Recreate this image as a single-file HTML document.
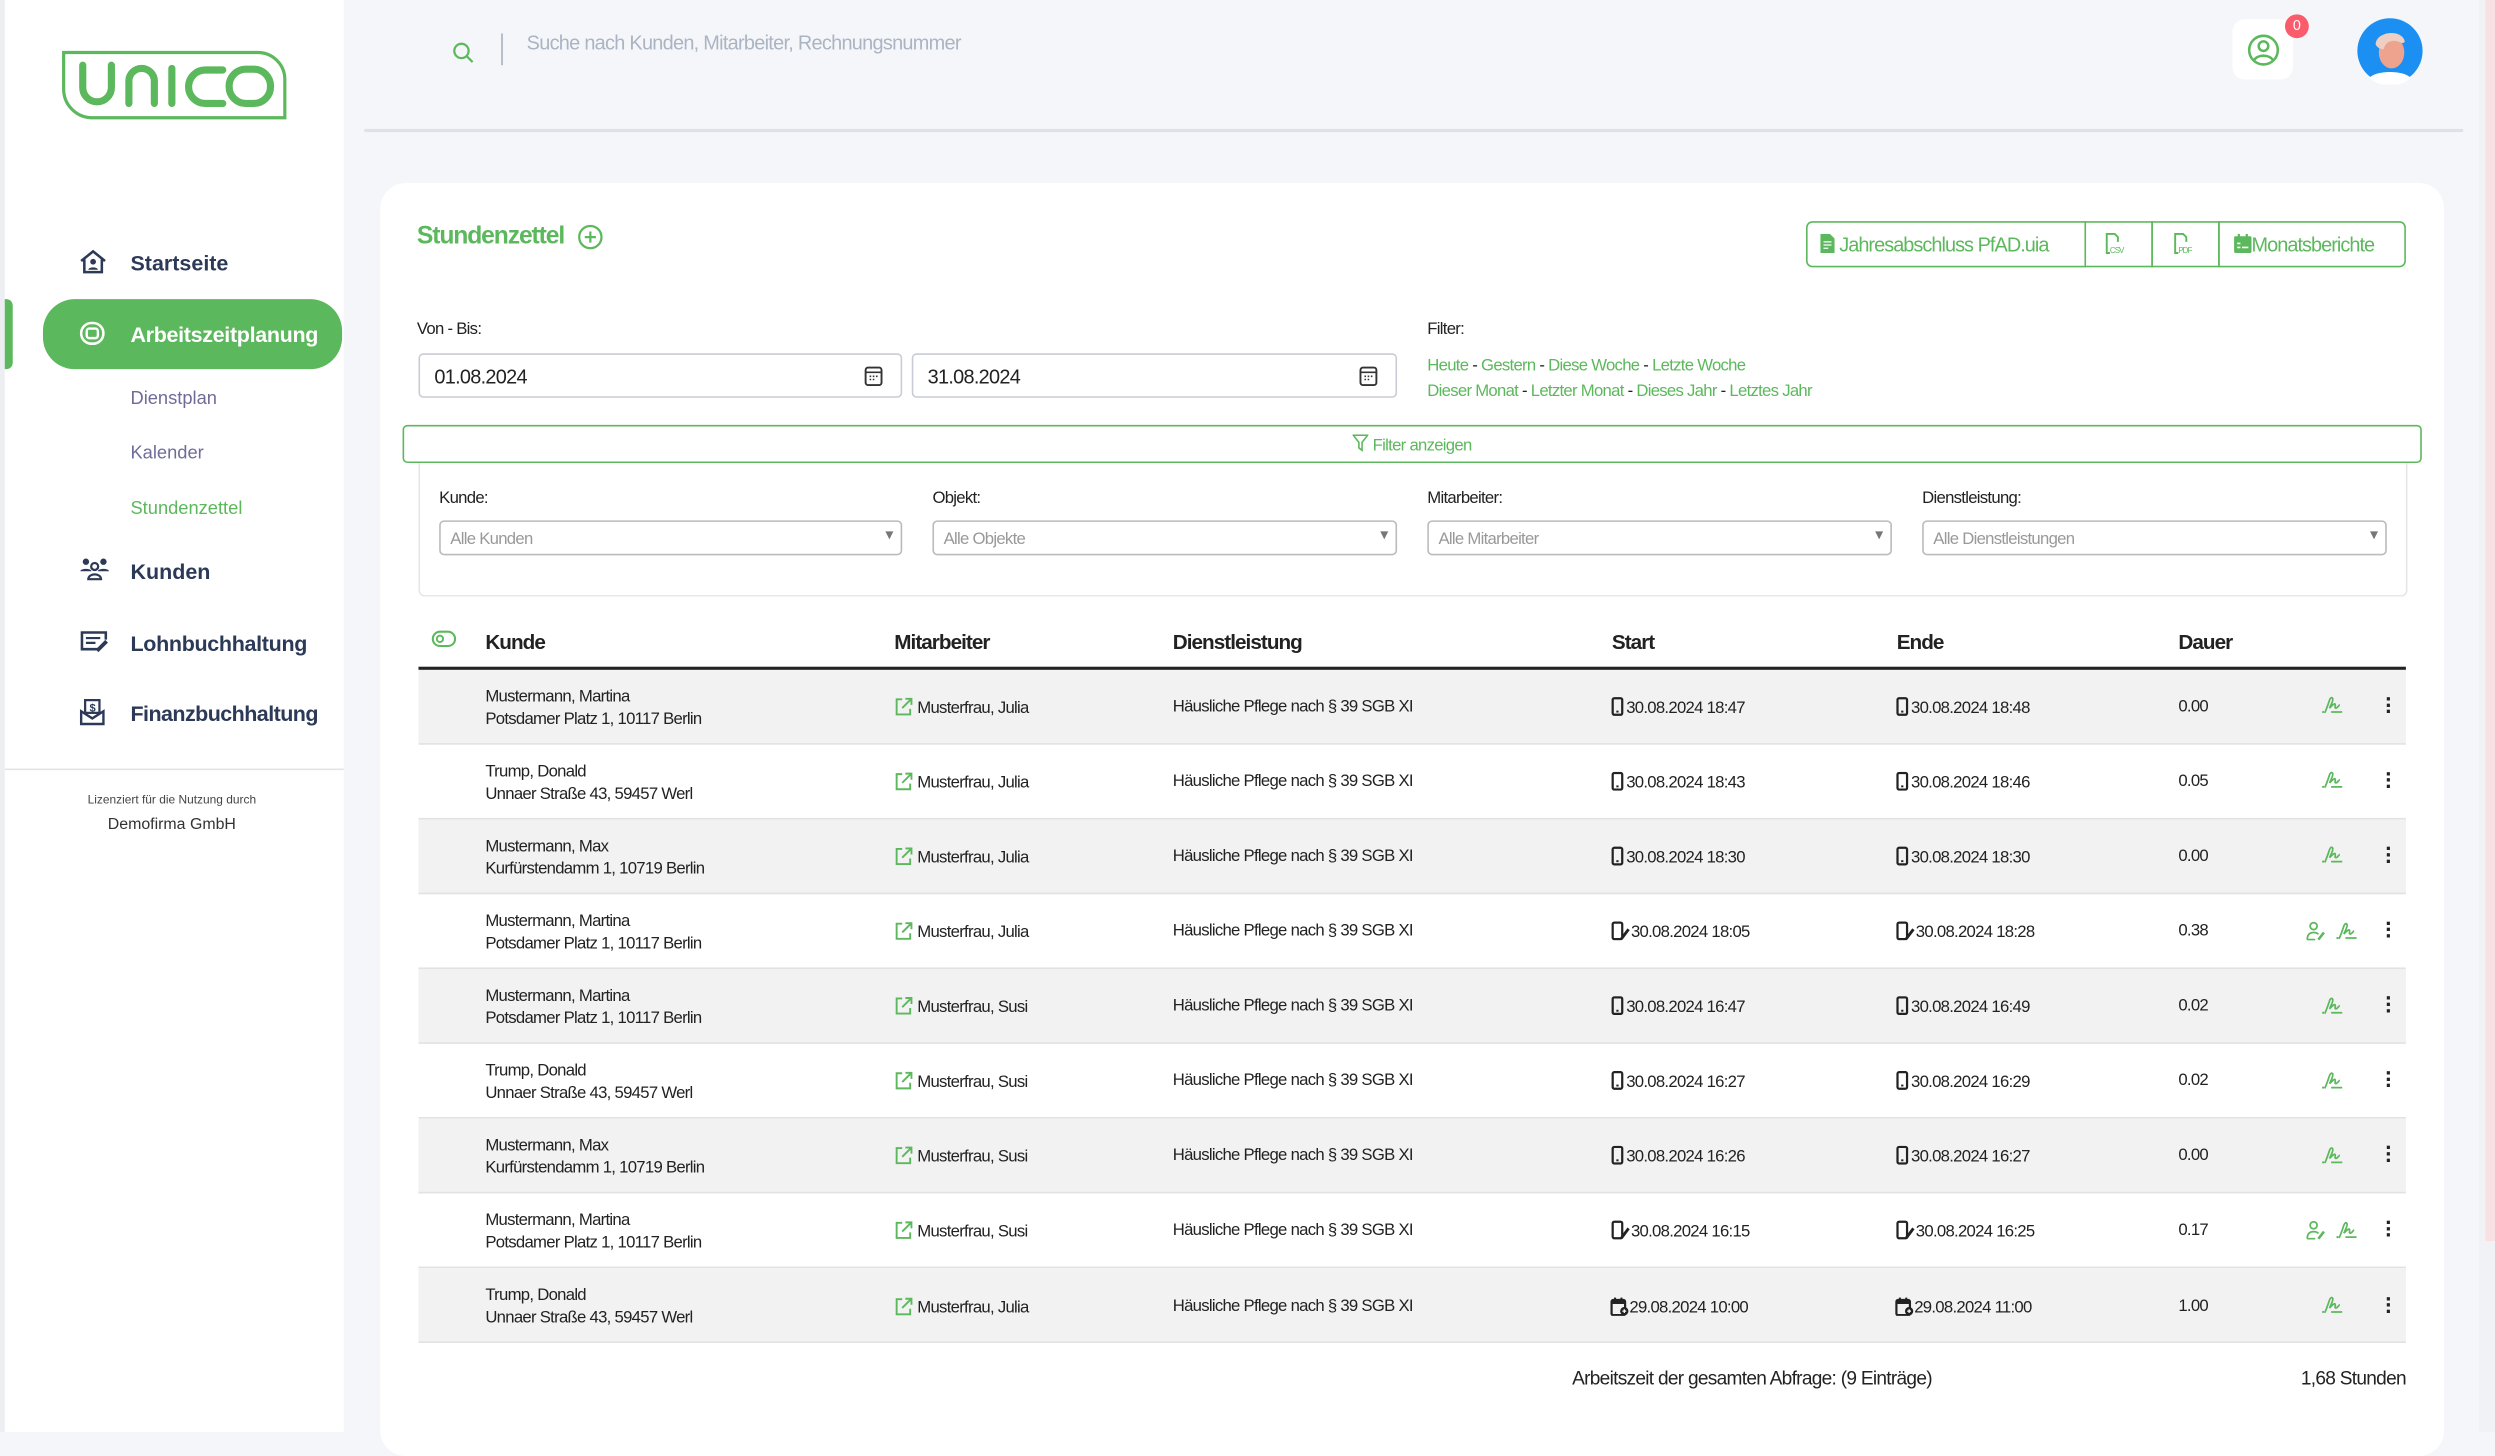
<!DOCTYPE html>
<html><head><meta charset="utf-8">
<style>
*{box-sizing:border-box;margin:0;padding:0}
html,body{width:2495px;height:1403px;overflow:hidden;background:#f5f6f9}
#w{position:absolute;left:0;top:0;width:1568px;height:900px;transform:scale(1.59120);transform-origin:0 0;font-family:"Liberation Sans",sans-serif;color:#222;letter-spacing:-0.45px}
.a{position:absolute;white-space:nowrap}
.side{font-family:"Liberation Sans",sans-serif;letter-spacing:0}
.nav{font-family:"Liberation Sans",sans-serif;font-weight:bold;font-size:13.5px;color:#2c3a57;letter-spacing:0}
.sub{font-family:"Liberation Sans",sans-serif;font-size:11.5px;color:#6f6c99;letter-spacing:0}
.g{color:#5cb85c}
.row{position:absolute;left:263px;width:1249px;height:47px;border-bottom:1px solid #e2e2e2}
.row.o{background:#f2f2f2}
.t11{font-size:10.5px}
svg{vertical-align:-2px}
.sel{position:absolute;top:327px;height:22px;border:1px solid #bbb;border-radius:3px;font-size:10.5px;color:#999;padding:5px 6px}
.sel:after{content:"▾";position:absolute;right:5px;top:3px;color:#777;font-size:10px}
.inp{position:absolute;top:222px;height:28px;border:1px solid #c9ccd6;border-radius:3px;font-size:12.5px;padding:7px 9px;background:#fff}
.btn{position:absolute;top:139px;height:29px;border:1px solid #5cb85c;font-size:12.5px;color:#5cb85c;padding:7px 8px;white-space:nowrap;letter-spacing:-0.6px}
</style></head><body><div id="w">
<svg width="0" height="0" style="position:absolute">
<defs>
<symbol id="mob" viewBox="0 0 10 12"><rect x="1.5" y="0.8" width="6" height="10.4" rx="1" fill="none" stroke="#222" stroke-width="1.4"/><rect x="3.8" y="8.6" width="1.4" height="1.2" fill="#222"/></symbol>
<symbol id="mobe" viewBox="0 0 13 12"><rect x="1.5" y="0.8" width="6" height="10.4" rx="1" fill="none" stroke="#222" stroke-width="1.4"/><path d="M7 11 L11.5 5" stroke="#222" stroke-width="1.8"/></symbol>
<symbol id="cal" viewBox="0 0 12 12"><rect x="0.8" y="2" width="8.5" height="9.5" rx="1" fill="none" stroke="#222" stroke-width="1.4"/><path d="M3 0.5v3M7 0.5v3" stroke="#222" stroke-width="1.3"/><rect x="0.8" y="2" width="8.5" height="2.5" fill="#222"/><circle cx="8.8" cy="9" r="2.6" fill="#222"/><path d="M8.8 7.8v2.4M7.6 9h2.4" stroke="#fff" stroke-width="0.8"/></symbol>
<symbol id="ext" viewBox="0 0 12 12"><path d="M5 1.5H1.5v9.5h8.5V7.5" fill="none" stroke="#5cb85c" stroke-width="1.2"/><path d="M5 7L10.5 1.5M7 1.2h3.8V5" fill="none" stroke="#5cb85c" stroke-width="1.2"/></symbol>
<symbol id="sig" viewBox="0 0 14 12"><path d="M2 11c1-2 2-5 3-8 .5-1.5 1.5-2 2-1s-1 4-2 6c2-2 3-3 3.5-2.5S8 8 9 8s2-2 2.5-2" fill="none" stroke="#5cb85c" stroke-width="1.1"/><path d="M6 10.5h7" stroke="#5cb85c" stroke-width="1.1"/><circle cx="1" cy="10.5" r=".7" fill="#5cb85c"/></symbol>
<symbol id="usr" viewBox="0 0 14 12"><circle cx="5" cy="3" r="2.2" fill="none" stroke="#5cb85c" stroke-width="1.1"/><path d="M1 11.5c0-3 1.5-4.5 4-4.5 1.5 0 2.5.5 3 1.2M1 11.5h5" fill="none" stroke="#5cb85c" stroke-width="1.1"/><path d="M8 11.5l3.5-4.5" stroke="#5cb85c" stroke-width="1.6"/></symbol>
</defs></svg>

<!-- sidebar -->
<div class="a" style="left:0;top:0;width:216px;height:900px;background:#fff"></div>
<div class="a" style="left:0;top:0;width:3px;height:900px;background:#eceef2"></div>
<svg class="a" style="left:38px;top:31px" width="143" height="45" viewBox="0 0 143 45">
<path d="M2 2H124A17 17 0 0 1 141 19V43H20A18 18 0 0 1 2 25Z" fill="none" stroke="#5cb85c" stroke-width="2"/>
<path d="M14 10v14a9 9 0 0 0 18 0V10" fill="none" stroke="#5cb85c" stroke-width="4.5" stroke-linecap="round"/>
<path d="M43 34V20a8 8 0 0 1 16 0v14" fill="none" stroke="#5cb85c" stroke-width="4.5" stroke-linecap="round"/>
<path d="M70 12v22" stroke="#5cb85c" stroke-width="4.5" stroke-linecap="round"/>
<path d="M102 13H91a10.5 10.5 0 0 0 0 21h11" fill="none" stroke="#5cb85c" stroke-width="4.5" stroke-linecap="round"/>
<rect x="106" y="12.5" width="26" height="21.5" rx="10.5" fill="none" stroke="#5cb85c" stroke-width="4.5"/>
</svg>
<svg class="a" style="left:50px;top:157px" width="17" height="15" viewBox="0 0 17 15"><path d="M1 7L8.5 1 16 7M3 6v8h11V6" fill="none" stroke="#2c3a57" stroke-width="1.6"/><circle cx="8.5" cy="7.5" r="1.8" fill="#2c3a57"/><path d="M5.5 12.5c0-2 6-2 6 0z" fill="#2c3a57"/></svg>
<div class="a nav" style="left:82px;top:158px">Startseite</div>
<div class="a" style="left:3px;top:188px;width:5px;height:44px;background:#5cb85c;border-radius:0 4px 4px 0"></div>
<div class="a" style="left:27px;top:188px;width:188px;height:44px;background:#5cb85c;border-radius:20px"></div>
<svg class="a" style="left:50px;top:202px" width="16" height="15" viewBox="0 0 16 15"><rect x="1" y="1" width="14" height="13" rx="6.5" fill="none" stroke="#fff" stroke-width="1.6"/><rect x="4.5" y="4.5" width="7" height="6" rx="1.5" fill="none" stroke="#fff" stroke-width="1.5"/></svg>
<div class="a nav" style="left:82px;top:203px;color:#fff;letter-spacing:-0.2px">Arbeitszeitplanung</div>
<div class="a sub" style="left:82px;top:245px">Dienstplan</div>
<div class="a sub" style="left:82px;top:279px">Kalender</div>
<div class="a sub" style="left:82px;top:314px;color:#5cb85c">Stundenzettel</div>
<svg class="a" style="left:50px;top:350px" width="19" height="15" viewBox="0 0 19 15"><circle cx="4" cy="3" r="2" fill="#2c3a57"/><circle cx="15" cy="3" r="2" fill="#2c3a57"/><circle cx="9.5" cy="6" r="2.2" fill="none" stroke="#2c3a57" stroke-width="1.4"/><path d="M0.5 9c0-2 7-2 7 0zM11.5 9c0-2 7-2 7 0z" fill="#2c3a57"/><path d="M5.5 14c0-4 8-4 8 0z" fill="none" stroke="#2c3a57" stroke-width="1.4"/></svg>
<div class="a nav" style="left:82px;top:352px">Kunden</div>
<svg class="a" style="left:50px;top:396px" width="19" height="14" viewBox="0 0 19 14"><path d="M12 12H1.5V1.5h15V6" fill="none" stroke="#2c3a57" stroke-width="1.6"/><path d="M4 5h9M4 8h6" stroke="#2c3a57" stroke-width="1.4"/><path d="M11 13l6-6" stroke="#2c3a57" stroke-width="2.4"/></svg>
<div class="a nav" style="left:82px;top:397px;letter-spacing:-0.2px">Lohnbuchhaltung</div>
<svg class="a" style="left:50px;top:439px" width="16" height="17" viewBox="0 0 16 17"><rect x="3.5" y="1" width="9" height="8" fill="none" stroke="#2c3a57" stroke-width="1.4"/><text x="8" y="8" font-size="7" text-anchor="middle" fill="#2c3a57" font-family="Liberation Sans" font-weight="bold">$</text><path d="M1 8v8h14V8L8 12.5z" fill="none" stroke="#2c3a57" stroke-width="1.5"/></svg>
<div class="a nav" style="left:82px;top:441px;letter-spacing:-0.35px">Finanzbuchhaltung</div>
<div class="a" style="left:3px;top:483px;width:213px;height:1px;background:#e3e3e8"></div>
<div class="a side" style="left:0;width:216px;top:498px;text-align:center;font-size:7.5px;color:#444">Lizenziert für die Nutzung durch</div>
<div class="a side" style="left:0;width:216px;top:513px;text-align:center;font-size:10px;color:#333">Demofirma GmbH</div>

<!-- top bar -->
<svg class="a" style="left:284px;top:26px" width="14" height="14" viewBox="0 0 14 14"><circle cx="6" cy="6" r="4.5" fill="none" stroke="#5cb85c" stroke-width="1.4"/><path d="M9.2 9.2L13 13" stroke="#5cb85c" stroke-width="1.4"/></svg>
<div class="a" style="left:315px;top:21px;width:1px;height:20px;background:#a8b0c0"></div>
<div class="a" style="left:331px;top:20px;font-size:12.5px;color:#aab4c3">Suche nach Kunden, Mitarbeiter, Rechnungsnummer</div>
<div class="a" style="left:229px;top:81px;width:1319px;height:2px;background:#dfdff0"></div>
<div class="a" style="left:1403px;top:12px;width:38px;height:38px;background:#fff;border-radius:8px"></div>
<svg class="a" style="left:1412px;top:21px" width="21" height="21" viewBox="0 0 21 21"><circle cx="10.5" cy="10.5" r="9" fill="none" stroke="#5cb85c" stroke-width="1.6"/><circle cx="10.5" cy="8" r="3" fill="none" stroke="#5cb85c" stroke-width="1.6"/><path d="M4.5 17c2-4 10-4 12 0" fill="none" stroke="#5cb85c" stroke-width="1.6"/></svg>
<div class="a" style="left:1436px;top:9px;width:15px;height:15px;border-radius:50%;background:#fa5c6b;color:#fff;font-size:9px;text-align:center;line-height:15px;letter-spacing:0">0</div>
<svg class="a" style="left:1481px;top:11px" width="42" height="42" viewBox="0 0 42 42"><circle cx="21" cy="21" r="20.5" fill="#1c8ff2"/><path d="M8 38c4-5 22-5 26 0a20 20 0 0 1-26 0z" fill="#fff"/><ellipse cx="22" cy="22" rx="8" ry="10" fill="#eea38f"/><path d="M12 17c0-8 15-10 18-3 1 3-2 2-4 1-4-1-8 0-9 5-2 0-4-1-5-3z" fill="#edcfc3"/></svg>
<div class="a" style="left:1558px;top:0;width:10px;height:900px;background:#f1f2f6"></div>
<div class="a" style="left:1562px;top:0;width:6px;height:780px;background:#f9e0e3"></div>

<!-- card -->
<div class="a" style="left:239px;top:115px;width:1297px;height:800px;background:#fff;border-radius:16px"></div>
<div class="a g" style="left:262px;top:140px;font-size:15.5px;font-weight:bold;letter-spacing:-0.7px">Stundenzettel</div>
<svg class="a" style="left:363px;top:141px" width="16" height="16" viewBox="0 0 16 16"><circle cx="8" cy="8" r="7" fill="none" stroke="#5cb85c" stroke-width="1.4"/><path d="M8 4.5v7M4.5 8h7" stroke="#5cb85c" stroke-width="1.4"/></svg>

<div class="btn" style="left:1135px;width:176px;border-radius:4px 0 0 4px"><svg width="9" height="12" viewBox="0 0 9 12" style="vertical-align:-1px"><path d="M0 0h6l3 3v9H0z" fill="#5cb85c"/><path d="M2 5h5M2 7h5M2 9h3" stroke="#fff" stroke-width=".8"/></svg> Jahresabschluss PfAD.uia</div>
<div class="btn" style="left:1310px;width:43px;border-left:none;padding-top:6px"><svg width="14" height="14" viewBox="0 0 14 14" style="margin-left:5px"><path d="M3 13H1V1h5l2 2v3" fill="none" stroke="#5cb85c" stroke-width="1.2"/><text x="3" y="13" font-size="5" fill="#5cb85c" font-family="Liberation Sans">CSV</text></svg></div>
<div class="btn" style="left:1352px;width:43px;border-left:1px solid #5cb85c;padding-top:6px"><svg width="14" height="14" viewBox="0 0 14 14" style="margin-left:5px"><path d="M3 13H1V1h5l2 2v3" fill="none" stroke="#5cb85c" stroke-width="1.2"/><text x="3" y="13" font-size="5" fill="#5cb85c" font-family="Liberation Sans">PDF</text></svg></div>
<div class="btn" style="left:1394px;width:118px;border-radius:0 4px 4px 0;padding-left:9px"><svg width="11" height="12" viewBox="0 0 11 12" style="vertical-align:-1px"><rect x="0" y="1.5" width="11" height="10.5" rx="1" fill="#5cb85c"/><path d="M3 0v3M8 0v3" stroke="#5cb85c" stroke-width="1.4"/><path d="M2 6h2M2 8.5h2M5 8.5h4" stroke="#fff" stroke-width="1"/></svg>Monatsberichte</div>

<div class="a t11" style="left:262px;top:201px">Von - Bis:</div>
<div class="inp" style="left:263px;width:304px">01.08.2024</div>
<div class="inp" style="left:573px;width:305px">31.08.2024</div>
<svg class="a" style="left:543px;top:230px" width="12" height="13" viewBox="0 0 12 13"><rect x="1" y="1" width="10" height="11" rx="1.5" fill="none" stroke="#333" stroke-width="1.2"/><path d="M1 4h10" stroke="#333"/><path d="M3.5 6.5h1M5.5 6.5h1M7.5 6.5h1M3.5 8.5h1M5.5 8.5h1" stroke="#333"/></svg>
<svg class="a" style="left:854px;top:230px" width="12" height="13" viewBox="0 0 12 13"><rect x="1" y="1" width="10" height="11" rx="1.5" fill="none" stroke="#333" stroke-width="1.2"/><path d="M1 4h10" stroke="#333"/><path d="M3.5 6.5h1M5.5 6.5h1M7.5 6.5h1M3.5 8.5h1M5.5 8.5h1" stroke="#333"/></svg>
<div class="a t11" style="left:897px;top:201px">Filter:</div>
<div class="a t11" style="left:897px;top:224px"><span class="g">Heute</span> - <span class="g">Gestern</span> - <span class="g">Diese Woche</span> - <span class="g">Letzte Woche</span></div>
<div class="a t11" style="left:897px;top:240px"><span class="g">Dieser Monat</span> - <span class="g">Letzter Monat</span> - <span class="g">Dieses Jahr</span> - <span class="g">Letztes Jahr</span></div>

<div class="a" style="left:253px;top:267px;width:1269px;height:24px;border:1px solid #5cb85c;border-radius:3px;text-align:center;font-size:10.5px;color:#5cb85c;padding-top:5px"><svg width="10" height="11" viewBox="0 0 10 11" style="vertical-align:-1px"><path d="M0.5 0.5h9L6 5v5L4 8.5V5z" fill="none" stroke="#5cb85c" stroke-width="1"/></svg> Filter anzeigen</div>
<div class="a" style="left:263px;top:291px;width:1250px;height:84px;border:1px solid #e6e6e6;border-top:none;border-radius:0 0 4px 4px"></div>
<div class="a t11" style="left:276px;top:307px">Kunde:</div>
<div class="a t11" style="left:586px;top:307px">Objekt:</div>
<div class="a t11" style="left:897px;top:307px">Mitarbeiter:</div>
<div class="a t11" style="left:1208px;top:307px">Dienstleistung:</div>
<div class="sel" style="left:276px;width:291px">Alle Kunden</div>
<div class="sel" style="left:586px;width:292px">Alle Objekte</div>
<div class="sel" style="left:897px;width:292px">Alle Mitarbeiter</div>
<div class="sel" style="left:1208px;width:292px">Alle Dienstleistungen</div>

<svg class="a" style="left:271px;top:396px" width="16" height="11" viewBox="0 0 16 11"><rect x="1" y="1" width="14" height="9" rx="4.5" fill="none" stroke="#5cb85c" stroke-width="1.3"/><circle cx="5.5" cy="5.5" r="2" fill="none" stroke="#5cb85c" stroke-width="1.2"/></svg>
<div class="a" style="left:305px;top:396px;font-size:13px;font-weight:bold;letter-spacing:-0.6px">Kunde</div>
<div class="a" style="left:562px;top:396px;font-size:13px;font-weight:bold;letter-spacing:-0.6px">Mitarbeiter</div>
<div class="a" style="left:737px;top:396px;font-size:13px;font-weight:bold;letter-spacing:-0.6px">Dienstleistung</div>
<div class="a" style="left:1013px;top:396px;font-size:13px;font-weight:bold;letter-spacing:-0.6px">Start</div>
<div class="a" style="left:1192px;top:396px;font-size:13px;font-weight:bold;letter-spacing:-0.6px">Ende</div>
<div class="a" style="left:1369px;top:396px;font-size:13px;font-weight:bold;letter-spacing:-0.6px">Dauer</div>
<div class="a" style="left:263px;top:419px;width:1249px;height:2px;background:#222"></div>

<div class="a" style="left:988px;top:859px;font-size:12px">Arbeitszeit der gesamten Abfrage: (9 Einträge)</div>
<div class="a" style="left:1380px;width:132px;text-align:right;top:859px;font-size:12px">1,68 Stunden</div>

<!-- rows -->
<div class="row o" style="top:421px"></div>
<div class="row" style="top:468px"></div>
<div class="row o" style="top:515px"></div>
<div class="row" style="top:562px"></div>
<div class="row o" style="top:609px"></div>
<div class="row" style="top:656px"></div>
<div class="row o" style="top:703px"></div>
<div class="row" style="top:750px"></div>
<div class="row o" style="top:797px"></div>

<div class="a t11" style="left:305px;top:431px;line-height:14px">Mustermann, Martina<br>Potsdamer Platz 1, 10117 Berlin</div>
<div class="a t11" style="left:305px;top:478px;line-height:14px">Trump, Donald<br>Unnaer Straße 43, 59457 Werl</div>
<div class="a t11" style="left:305px;top:525px;line-height:14px">Mustermann, Max<br>Kurfürstendamm 1, 10719 Berlin</div>
<div class="a t11" style="left:305px;top:572px;line-height:14px">Mustermann, Martina<br>Potsdamer Platz 1, 10117 Berlin</div>
<div class="a t11" style="left:305px;top:619px;line-height:14px">Mustermann, Martina<br>Potsdamer Platz 1, 10117 Berlin</div>
<div class="a t11" style="left:305px;top:666px;line-height:14px">Trump, Donald<br>Unnaer Straße 43, 59457 Werl</div>
<div class="a t11" style="left:305px;top:713px;line-height:14px">Mustermann, Max<br>Kurfürstendamm 1, 10719 Berlin</div>
<div class="a t11" style="left:305px;top:760px;line-height:14px">Mustermann, Martina<br>Potsdamer Platz 1, 10117 Berlin</div>
<div class="a t11" style="left:305px;top:807px;line-height:14px">Trump, Donald<br>Unnaer Straße 43, 59457 Werl</div>

<div class="a t11" style="left:562px;top:438px"><svg width="12" height="12"><use href="#ext"/></svg> Musterfrau, Julia</div>
<div class="a t11" style="left:562px;top:485px"><svg width="12" height="12"><use href="#ext"/></svg> Musterfrau, Julia</div>
<div class="a t11" style="left:562px;top:532px"><svg width="12" height="12"><use href="#ext"/></svg> Musterfrau, Julia</div>
<div class="a t11" style="left:562px;top:579px"><svg width="12" height="12"><use href="#ext"/></svg> Musterfrau, Julia</div>
<div class="a t11" style="left:562px;top:626px"><svg width="12" height="12"><use href="#ext"/></svg> Musterfrau, Susi</div>
<div class="a t11" style="left:562px;top:673px"><svg width="12" height="12"><use href="#ext"/></svg> Musterfrau, Susi</div>
<div class="a t11" style="left:562px;top:720px"><svg width="12" height="12"><use href="#ext"/></svg> Musterfrau, Susi</div>
<div class="a t11" style="left:562px;top:767px"><svg width="12" height="12"><use href="#ext"/></svg> Musterfrau, Susi</div>
<div class="a t11" style="left:562px;top:815px"><svg width="12" height="12"><use href="#ext"/></svg> Musterfrau, Julia</div>

<div class="a t11" style="left:737px;top:438px">Häusliche Pflege nach § 39 SGB XI</div>
<div class="a t11" style="left:737px;top:485px">Häusliche Pflege nach § 39 SGB XI</div>
<div class="a t11" style="left:737px;top:532px">Häusliche Pflege nach § 39 SGB XI</div>
<div class="a t11" style="left:737px;top:579px">Häusliche Pflege nach § 39 SGB XI</div>
<div class="a t11" style="left:737px;top:626px">Häusliche Pflege nach § 39 SGB XI</div>
<div class="a t11" style="left:737px;top:673px">Häusliche Pflege nach § 39 SGB XI</div>
<div class="a t11" style="left:737px;top:720px">Häusliche Pflege nach § 39 SGB XI</div>
<div class="a t11" style="left:737px;top:767px">Häusliche Pflege nach § 39 SGB XI</div>
<div class="a t11" style="left:737px;top:815px">Häusliche Pflege nach § 39 SGB XI</div>

<div class="a t11" style="left:1012px;top:438px"><svg width="10" height="12"><use href="#mob"/></svg>30.08.2024 18:47</div>
<div class="a t11" style="left:1012px;top:485px"><svg width="10" height="12"><use href="#mob"/></svg>30.08.2024 18:43</div>
<div class="a t11" style="left:1012px;top:532px"><svg width="10" height="12"><use href="#mob"/></svg>30.08.2024 18:30</div>
<div class="a t11" style="left:1012px;top:579px"><svg width="13" height="12"><use href="#mobe"/></svg>30.08.2024 18:05</div>
<div class="a t11" style="left:1012px;top:626px"><svg width="10" height="12"><use href="#mob"/></svg>30.08.2024 16:47</div>
<div class="a t11" style="left:1012px;top:673px"><svg width="10" height="12"><use href="#mob"/></svg>30.08.2024 16:27</div>
<div class="a t11" style="left:1012px;top:720px"><svg width="10" height="12"><use href="#mob"/></svg>30.08.2024 16:26</div>
<div class="a t11" style="left:1012px;top:767px"><svg width="13" height="12"><use href="#mobe"/></svg>30.08.2024 16:15</div>
<div class="a t11" style="left:1012px;top:815px"><svg width="12" height="12"><use href="#cal"/></svg>29.08.2024 10:00</div>

<div class="a t11" style="left:1191px;top:438px"><svg width="10" height="12"><use href="#mob"/></svg>30.08.2024 18:48</div>
<div class="a t11" style="left:1191px;top:485px"><svg width="10" height="12"><use href="#mob"/></svg>30.08.2024 18:46</div>
<div class="a t11" style="left:1191px;top:532px"><svg width="10" height="12"><use href="#mob"/></svg>30.08.2024 18:30</div>
<div class="a t11" style="left:1191px;top:579px"><svg width="13" height="12"><use href="#mobe"/></svg>30.08.2024 18:28</div>
<div class="a t11" style="left:1191px;top:626px"><svg width="10" height="12"><use href="#mob"/></svg>30.08.2024 16:49</div>
<div class="a t11" style="left:1191px;top:673px"><svg width="10" height="12"><use href="#mob"/></svg>30.08.2024 16:29</div>
<div class="a t11" style="left:1191px;top:720px"><svg width="10" height="12"><use href="#mob"/></svg>30.08.2024 16:27</div>
<div class="a t11" style="left:1191px;top:767px"><svg width="13" height="12"><use href="#mobe"/></svg>30.08.2024 16:25</div>
<div class="a t11" style="left:1191px;top:815px"><svg width="12" height="12"><use href="#cal"/></svg>29.08.2024 11:00</div>

<div class="a t11" style="left:1369px;top:438px">0.00</div>
<div class="a t11" style="left:1369px;top:485px">0.05</div>
<div class="a t11" style="left:1369px;top:532px">0.00</div>
<div class="a t11" style="left:1369px;top:579px">0.38</div>
<div class="a t11" style="left:1369px;top:626px">0.02</div>
<div class="a t11" style="left:1369px;top:673px">0.02</div>
<div class="a t11" style="left:1369px;top:720px">0.00</div>
<div class="a t11" style="left:1369px;top:767px">0.17</div>
<div class="a t11" style="left:1369px;top:815px">1.00</div>

<svg class="a" style="left:1459px;top:437px" width="14" height="12"><use href="#sig"/></svg>
<svg class="a" style="left:1459px;top:484px" width="14" height="12"><use href="#sig"/></svg>
<svg class="a" style="left:1459px;top:531px" width="14" height="12"><use href="#sig"/></svg>
<svg class="a" style="left:1449px;top:579px" width="14" height="12"><use href="#usr"/></svg><svg class="a" style="left:1468px;top:579px" width="14" height="12"><use href="#sig"/></svg>
<svg class="a" style="left:1459px;top:626px" width="14" height="12"><use href="#sig"/></svg>
<svg class="a" style="left:1459px;top:673px" width="14" height="12"><use href="#sig"/></svg>
<svg class="a" style="left:1459px;top:720px" width="14" height="12"><use href="#sig"/></svg>
<svg class="a" style="left:1449px;top:767px" width="14" height="12"><use href="#usr"/></svg><svg class="a" style="left:1468px;top:767px" width="14" height="12"><use href="#sig"/></svg>
<svg class="a" style="left:1459px;top:814px" width="14" height="12"><use href="#sig"/></svg>

<div class="a" style="left:1499px;top:437px;font-size:14px;font-weight:bold;line-height:4px;width:4px;text-align:center">·<br>·<br>·</div>
<div class="a" style="left:1499px;top:484px;font-size:14px;font-weight:bold;line-height:4px;width:4px;text-align:center">·<br>·<br>·</div>
<div class="a" style="left:1499px;top:531px;font-size:14px;font-weight:bold;line-height:4px;width:4px;text-align:center">·<br>·<br>·</div>
<div class="a" style="left:1499px;top:578px;font-size:14px;font-weight:bold;line-height:4px;width:4px;text-align:center">·<br>·<br>·</div>
<div class="a" style="left:1499px;top:625px;font-size:14px;font-weight:bold;line-height:4px;width:4px;text-align:center">·<br>·<br>·</div>
<div class="a" style="left:1499px;top:672px;font-size:14px;font-weight:bold;line-height:4px;width:4px;text-align:center">·<br>·<br>·</div>
<div class="a" style="left:1499px;top:719px;font-size:14px;font-weight:bold;line-height:4px;width:4px;text-align:center">·<br>·<br>·</div>
<div class="a" style="left:1499px;top:766px;font-size:14px;font-weight:bold;line-height:4px;width:4px;text-align:center">·<br>·<br>·</div>
<div class="a" style="left:1499px;top:814px;font-size:14px;font-weight:bold;line-height:4px;width:4px;text-align:center">·<br>·<br>·</div>
</div></body></html>
